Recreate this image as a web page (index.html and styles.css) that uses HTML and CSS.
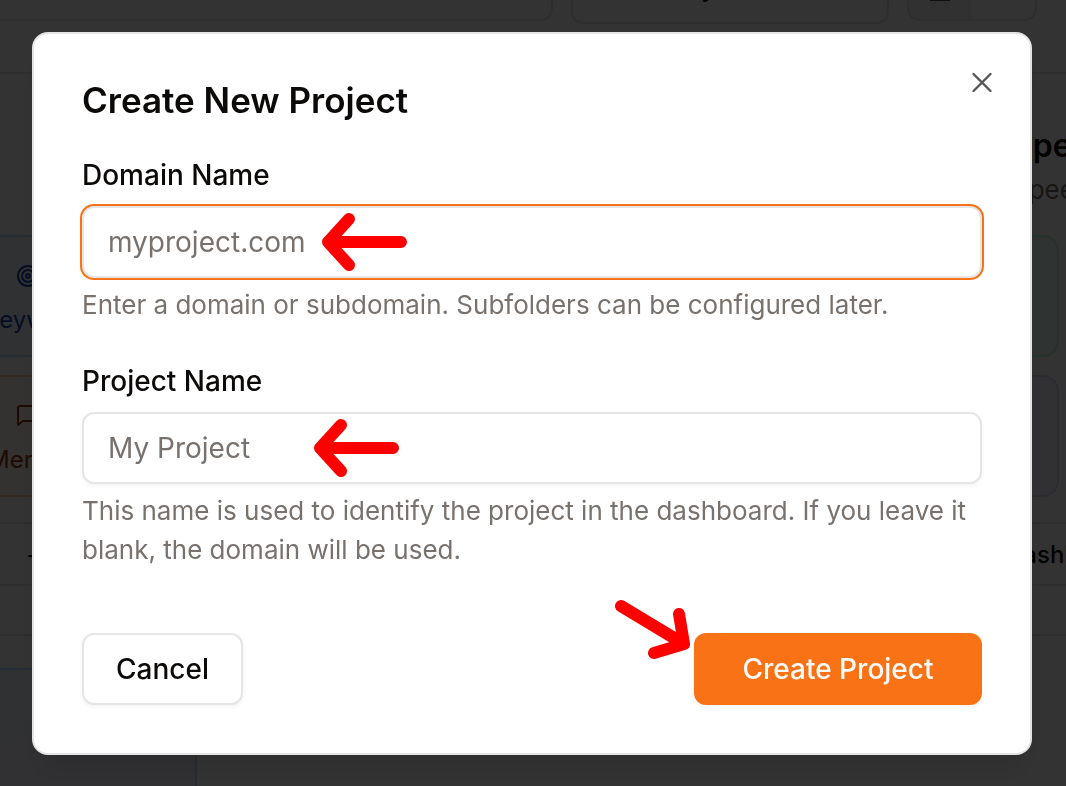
FILE: index.html
```html
<!DOCTYPE html>
<html lang="en">
<head>
  <meta charset="UTF-8" />
  <meta name="viewport" content="width=device-width, initial-scale=1.0"/>
  <title>Create New Project</title>
  <link rel="stylesheet" href="styles.css">
</head>
<body>
  <!-- Dashboard -->
  <div class="page" aria-hidden="true">
    <div class="toolbar">
      <div class="tool search"></div>
      <div class="tool sort">by</div>
      <div class="tool view"><span class="view-grid"><i></i></span></div>
    </div>

    <div class="project">
      <div class="project-header">
        <h3>Speed</h3>
        <p>Speed</p>
      </div>
      <div class="tiles">
        <div class="tile blue">
          <svg width="24" height="24" viewBox="0 0 24 24" fill="none" stroke="currentColor" stroke-width="2"><circle cx="12" cy="12" r="10"/><circle cx="12" cy="12" r="6"/><circle cx="12" cy="12" r="2"/></svg>
          <span>Keywords</span>
        </div>
        <div class="tile green"></div>
        <div class="tile orange">
          <svg width="24" height="24" viewBox="0 0 24 24" fill="none" stroke="currentColor" stroke-width="2" stroke-linejoin="round"><path d="M22 15a2 2 0 0 1-2 2H7l-5 4V4a2 2 0 0 1 2-2h16a2 2 0 0 1 2 2z"/></svg>
          <span>Mentions</span>
        </div>
        <div class="tile purple"></div>
      </div>
      <div class="project-footer">
        <span>+</span>
        <span>Dashboard</span>
      </div>
    </div>
    <div class="preview"></div>
  </div>

  <!-- Modal -->
  <div class="overlay">
    <form class="modal" role="dialog" aria-labelledby="modalTitle">
      <button type="button" class="close-btn" aria-label="Close">
        <svg width="32" height="32" viewBox="0 0 32 32" fill="none" stroke="currentColor" stroke-width="2.4" stroke-linecap="round"><path d="M7.500 8l17 17M24.500 8l-17 17"/></svg>
      </button>

      <h2 id="modalTitle">Create New Project</h2>

      <div class="field">
        <label for="domainName">Domain Name</label>
        <div class="input-wrapper">
          <input type="text" id="domainName" class="active" placeholder="myproject.com">
          <svg class="arrow arrow-domain" width="88" height="60" viewBox="0 0 88 60"><path d="M80 30H9M28 7L7 30L28 53"/></svg>
        </div>
        <p>Enter a domain or subdomain. Subfolders can be configured later.</p>
      </div>

      <div class="field">
        <label for="projectName">Project Name</label>
        <div class="input-wrapper">
          <input type="text" id="projectName" placeholder="My Project">
          <svg class="arrow arrow-project" width="88" height="60" viewBox="0 0 88 60"><path d="M80 30H9M28 7L7 30L28 53"/></svg>
        </div>
        <p>This name is used to identify the project in the dashboard. If you leave it blank, the domain will be used.</p>
      </div>

      <div class="actions">
        <button type="button" class="btn cancel-btn">Cancel</button>
        <div class="create-wrapper">
          <button type="submit" class="btn create-btn">Create Project</button>
          <svg class="arrow arrow-create" width="80" height="64" viewBox="0 0 80 64"><path d="M7 8L70 46M65 16L70 46L40 55"/></svg>
        </div>
      </div>
    </form>
  </div>
</body>
</html>
```

FILE: styles.css
```css
* {
  margin: 0;
  padding: 0;
  box-sizing: border-box;
  font-family: Inter, sans-serif;
}

body {
  background: #fff;
  color: #0c0a09;
  overflow: hidden;
}

/* Dashboard */
.page {
  height: 100vh;
  overflow: hidden;
  font-size: 24px;
}

.toolbar {
  display: flex;
  align-items: flex-start;
  gap: 18px;
  height: 72px;
  padding-right: 29px;
}

.tool {
  height: 21px;
  border: 2px solid #e7e5e4;
  border-top: none;
}

.search {
  flex: 1;
  border-left: none;
  border-radius: 0 0 12px 0;
}

.sort {
  width: 318px;
  height: 64px;
  margin-top: -40px;
  padding-right: 58px;
  border-radius: 12px;
  text-align: center;
  font-weight: 500;
  line-height: 58px;
}

.view {
  width: 130px;
  border-radius: 0 0 12px 12px;
}

.view-grid {
  display: block;
  width: 62px;
  height: 19px;
  background: #f5f5f4;
  border-radius: 0 0 0 12px;
}

.view-grid i {
  display: block;
  width: 20px;
  height: 1px;
  margin: 0 auto;
  background: #57534e;
}

.project {
  height: 564px;
  border: 2px solid #e7e5e4;
  border-width: 2px 0;
}

.project-header {
  height: 161px;
  padding-top: 50px;
  display: flex;
  flex-direction: column;
  align-items: flex-end;
}

.project-header h3 {
  width: 54px;
  font-size: 32px;
  font-weight: 600;
  line-height: 44px;
}

.project-header p {
  width: 54px;
  color: #78716c;
  font-size: 26px;
  line-height: 44px;
}

.tiles {
  display: grid;
  grid-template-columns: 1fr 1fr;
  gap: 18px;
  padding-right: 7px;
}

.tile {
  height: 122px;
  padding-top: 27px;
  border: 2px solid;
  border-radius: 0 16px 16px 0;
  border-left: none;
  overflow: hidden;
}

.tile svg {
  display: block;
  margin-left: 16px;
}

.tile span {
  display: block;
  margin: 16px 0 0 -16px;
  line-height: 32px;
}

.blue {
  background: #eff6ff;
  border-color: #bfdbfe;
  color: #1e40af;
}

.green {
  background: #ecfdf5;
  border-color: #bbf7d0;
}

.orange {
  background: #fff7ed;
  border-color: #fed7aa;
  color: #9a3412;
}

.orange span {
  margin-left: -12px;
}

.purple {
  background: #f5f3ff;
  border-color: #ddd6fe;
}

.project-footer {
  display: flex;
  justify-content: space-between;
  align-items: center;
  height: 64px;
  margin-top: 25px;
  padding-left: 26px;
  border: 2px solid #e7e5e4;
  border-width: 2px 0;
  font-weight: 500;
}

.project-footer span:last-child {
  width: 60px;
}

.preview {
  width: 197px;
  height: 160px;
  margin-top: 32px;
  background: linear-gradient(#eff6ff, #f5f3ff);
  border: 2px solid #bfdbfe;
  border-left: none;
}

/* Modal */
.overlay {
  position: fixed;
  inset: 0;
  display: flex;
  justify-content: center;
  align-items: flex-start;
  padding: 32px 34px 30px 32px;
  background: rgba(0, 0, 0, 0.8);
}

.modal {
  position: relative;
  width: 100%;
  max-width: 1000px;
  padding: 48px;
  background: #fff;
  border: 2px solid #e5e5e5;
  border-radius: 16px;
  box-shadow: 0 20px 30px -6px rgba(0, 0, 0, 0.1);
}

.close-btn {
  position: absolute;
  top: 32px;
  right: 32px;
  width: 32px;
  height: 32px;
  background: transparent;
  border: none;
  color: #555;
  cursor: pointer;
}

.close-btn svg {
  display: block;
}

.modal h2 {
  font-size: 35px;
  font-weight: 600;
  line-height: 36px;
}

.field {
  margin-top: 42px;
}

.field label {
  display: block;
  margin-bottom: 16px;
  font-size: 28px;
  font-weight: 500;
  line-height: 30px;
}

.input-wrapper {
  position: relative;
}

.field input {
  display: block;
  width: 100%;
  height: 72px;
  padding: 0 24px;
  border: 2px solid #e5e5e5;
  border-radius: 12px;
  background: #fff;
  font-size: 28px;
  box-shadow: 0 2px 4px rgba(0, 0, 0, 0.05);
  outline: none;
}

.field input.active,
.field input:focus {
  box-shadow: 0 0 0 2px #f97316;
}

.field input::placeholder {
  color: #78716c;
}

.field p {
  margin-top: 7px;
  color: #78716c;
  font-size: 26px;
  line-height: 39px;
}

.actions {
  display: flex;
  justify-content: space-between;
  margin-top: 64px;
}

.btn {
  height: 72px;
  padding: 0 32px;
  border: 2px solid #e5e5e5;
  border-radius: 12px;
  background: #fff;
  color: #0c0a09;
  font-size: 28px;
  font-weight: 500;
  box-shadow: 0 2px 4px rgba(0, 0, 0, 0.05);
  cursor: pointer;
}

.create-wrapper {
  position: relative;
}

.create-btn {
  min-width: 288px;
  border: none;
  background: #f97316;
  color: #fafaf9;
}

/* Pointer arrows */
.arrow {
  position: absolute;
  fill: none;
  stroke: #f00;
  stroke-width: 12;
  stroke-linecap: round;
  stroke-linejoin: round;
  pointer-events: none;
}

.arrow-domain {
  top: 6px;
  left: 239px;
}

.arrow-project {
  top: 6px;
  left: 231px;
}

.arrow-create {
  top: -35px;
  left: -80px;
}
```
